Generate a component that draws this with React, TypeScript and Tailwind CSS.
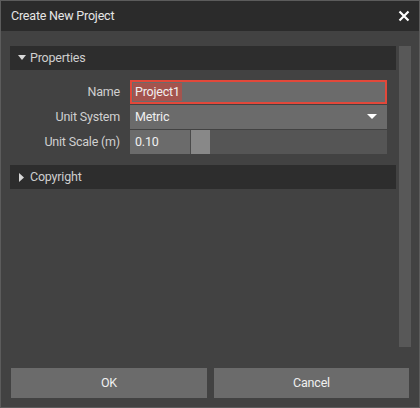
import React from "react";

export default function App() {
  const font = { fontFamily: "Roboto, 'Noto Sans', sans-serif" };
  return (
    <div
      className="w-[420px] h-[408px] border border-[#5c5c5c] bg-[#424242] flex flex-col text-[12.5px] tracking-[-0.2px] select-none"
      style={font}
    >
      <div className="h-[30px] bg-[#2b2b2b] flex items-center justify-between pl-[10px] pr-[8px] shrink-0">
        <span className="text-[#e6e6e6]">Create New Project</span>
        <svg width="12" height="12" viewBox="0 0 12 12" className="mr-[1px]">
          <path d="M1.5 1.5 L10.5 10.5 M10.5 1.5 L1.5 10.5" stroke="#ffffff" strokeWidth="2.2" />
        </svg>
      </div>
      <div className="flex-1 flex flex-col">
        <div className="flex pt-[15px] pl-[9px] pr-[8px] h-[316px]">
          <div className="flex-1 flex flex-col">
            <div className="h-[24px] bg-[#2d2d2d] flex items-center pl-[8px] text-[#cfcfcf]">
              <svg width="8" height="6" viewBox="0 0 8 6" className="mr-[4px]">
                <path d="M0 0 L8 0 L4 5 Z" fill="#d8d8d8" />
              </svg>
              Properties
            </div>
            <div className="flex flex-col gap-[1px] mt-[10px] pr-[9px]">
              <div className="flex h-[24px]">
                <div className="w-[120px] pr-[10px] flex items-center justify-end text-[#d0d0d0]">Name</div>
                <div className="flex-1 bg-[#6b6b6b] border-2 border-[#e2483a] flex items-center pl-[1px]">
                  <span className="bg-[#a4544e] text-[#f0f0f0] px-[2px] leading-[18px]">Project1</span>
                </div>
              </div>
              <div className="flex h-[24px]">
                <div className="w-[120px] pr-[10px] flex items-center justify-end text-[#d0d0d0]">Unit System</div>
                <div className="flex-1 bg-[#6b6b6b] flex items-center justify-between pl-[5px] pr-[10px] text-[#f0f0f0]">
                  Metric
                  <svg width="10" height="6" viewBox="0 0 10 6">
                    <path d="M0 0 L10 0 L5 5 Z" fill="#ffffff" />
                  </svg>
                </div>
              </div>
              <div className="flex h-[24px]">
                <div className="w-[120px] pr-[10px] flex items-center justify-end text-[#d0d0d0]">Unit Scale (m)</div>
                <div className="flex-1 flex bg-[#555555]">
                  <div className="w-[60px] bg-[#6b6b6b] flex items-center pl-[5px] text-[#f0f0f0]">0.10</div>
                  <div className="w-[1px] bg-[#4a4a4a]" />
                  <div className="w-[19px] bg-[#888888]" />
                </div>
              </div>
            </div>
            <div className="h-[24px] bg-[#2d2d2d] flex items-center pl-[9px] text-[#cfcfcf] mt-[11px]">
              <svg width="6" height="9" viewBox="0 0 6 9" className="mr-[5px]">
                <path d="M0 0 L5 4.5 L0 9 Z" fill="#d8d8d8" />
              </svg>
              Copyright
            </div>
          </div>
          <div className="w-[12px] ml-[3px] bg-[#585858]" />
        </div>
        <div className="flex-1" />
        <div className="flex gap-[7px] px-[10px] pb-[9px]">
          <button className="w-[196px] h-[30px] bg-[#6b6b6b] text-[#f0f0f0]">OK</button>
          <button className="flex-1 h-[30px] bg-[#6b6b6b] text-[#f0f0f0]">Cancel</button>
        </div>
      </div>
    </div>
  );
}
